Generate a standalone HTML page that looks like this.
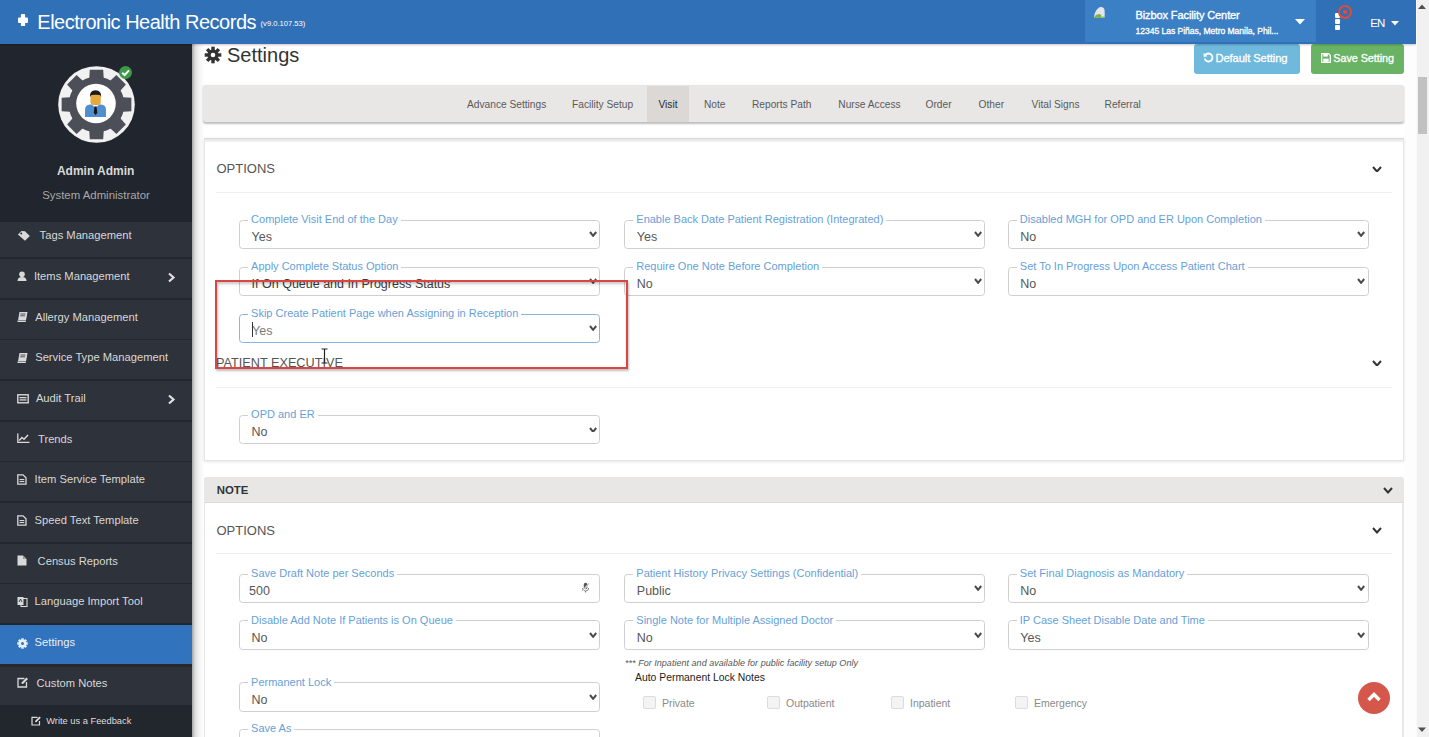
<!DOCTYPE html>
<html><head><meta charset="utf-8"><style>
html,body{margin:0;padding:0;width:1429px;height:737px;overflow:hidden;background:#fff}
.t{position:absolute;white-space:pre;font-family:"Liberation Sans", sans-serif}
div,svg{font-family:"Liberation Sans", sans-serif}
</style></head><body>
<div style="position:absolute;left:0px;top:0px;width:1416px;height:737px;background:#fff"></div>
<div style="position:absolute;left:192px;top:44px;width:12px;height:693px;background:linear-gradient(to right,#a5a5a5,#dcdcdc 3px,#f3f3f3 7px,#fcfcfc 11px)"></div>
<div style="position:absolute;left:1404px;top:44px;width:12px;height:693px;background:#fdfdfd"></div>
<svg style="position:absolute;left:204px;top:46px" width="18" height="18" viewBox="0 0 18 18"><g transform="translate(9 9)" fill="#333"><circle r="5.6"/><rect x="-1.7" y="-8.3" width="3.4" height="4" transform="rotate(0)"/><rect x="-1.7" y="-8.3" width="3.4" height="4" transform="rotate(45)"/><rect x="-1.7" y="-8.3" width="3.4" height="4" transform="rotate(90)"/><rect x="-1.7" y="-8.3" width="3.4" height="4" transform="rotate(135)"/><rect x="-1.7" y="-8.3" width="3.4" height="4" transform="rotate(180)"/><rect x="-1.7" y="-8.3" width="3.4" height="4" transform="rotate(225)"/><rect x="-1.7" y="-8.3" width="3.4" height="4" transform="rotate(270)"/><rect x="-1.7" y="-8.3" width="3.4" height="4" transform="rotate(315)"/><circle r="2.3" fill="#fff"/></g></svg>
<div class="t" style="left:227.0px;top:45.07px;font-size:20px;line-height:20px;color:#333;font-weight:400;font-style:normal;letter-spacing:0px;">Settings</div>
<div style="position:absolute;left:1194px;top:44px;width:106px;height:29.5px;background:#6fb9dc;border-radius:3px"></div>
<div class="t" style="left:1215.5px;top:53.02px;font-size:11.2px;line-height:11.2px;color:#fff;font-weight:400;font-style:normal;letter-spacing:-0.1px;-webkit-text-stroke:0.3px #fff;">Default Setting</div>
<svg style="position:absolute;left:1203px;top:52px" width="11" height="11" viewBox="0 0 11 11"><path d="M2.2 3.2 A4 4 0 1 1 1.6 6.5" fill="none" stroke="#fff" stroke-width="1.8"/><path d="M0.5 1 L0.8 5 L4.5 4.2 Z" fill="#fff"/></svg>
<div style="position:absolute;left:1311px;top:44px;width:93px;height:29.5px;background:#6ab364;border-radius:3px"></div>
<div class="t" style="left:1333.3px;top:53.36px;font-size:10.8px;line-height:10.8px;color:#fff;font-weight:400;font-style:normal;letter-spacing:-0.05px;-webkit-text-stroke:0.3px #fff;">Save Setting</div>
<svg style="position:absolute;left:1321px;top:53px" width="10" height="10" viewBox="0 0 10 10"><path d="M0.7 0.7 H7.5 L9.3 2.5 V9.3 H0.7 Z" fill="none" stroke="#fff" stroke-width="1.3"/><rect x="2.3" y="1" width="4.5" height="2.6" fill="#fff"/><rect x="2.3" y="5.6" width="5.4" height="3.2" fill="#fff"/></svg>
<div style="position:absolute;left:203px;top:84.5px;width:1201px;height:37.5px;background:#e9e7e6;border-radius:3px;box-shadow:0 1.5px 2px rgba(0,0,0,0.26)"></div>
<div style="position:absolute;left:647px;top:85.5px;width:42px;height:36.5px;background:#dcd8d6"></div>
<div class="t" style="left:467.0px;top:99.67px;font-size:10.2px;line-height:10.2px;color:#5a5a5a;font-weight:400;font-style:normal;letter-spacing:0px;">Advance Settings</div>
<div class="t" style="left:572.0px;top:99.67px;font-size:10.2px;line-height:10.2px;color:#5a5a5a;font-weight:400;font-style:normal;letter-spacing:0px;">Facility Setup</div>
<div class="t" style="left:658.5px;top:99.67px;font-size:10.2px;line-height:10.2px;color:#2a2a2a;font-weight:400;font-style:normal;letter-spacing:0px;">Visit</div>
<div class="t" style="left:704.0px;top:99.67px;font-size:10.2px;line-height:10.2px;color:#5a5a5a;font-weight:400;font-style:normal;letter-spacing:0px;">Note</div>
<div class="t" style="left:752.0px;top:99.67px;font-size:10.2px;line-height:10.2px;color:#5a5a5a;font-weight:400;font-style:normal;letter-spacing:0px;">Reports Path</div>
<div class="t" style="left:838.3px;top:99.67px;font-size:10.2px;line-height:10.2px;color:#5a5a5a;font-weight:400;font-style:normal;letter-spacing:0px;">Nurse Access</div>
<div class="t" style="left:925.5px;top:99.67px;font-size:10.2px;line-height:10.2px;color:#5a5a5a;font-weight:400;font-style:normal;letter-spacing:0px;">Order</div>
<div class="t" style="left:978.6px;top:99.67px;font-size:10.2px;line-height:10.2px;color:#5a5a5a;font-weight:400;font-style:normal;letter-spacing:0px;">Other</div>
<div class="t" style="left:1031.6px;top:99.67px;font-size:10.2px;line-height:10.2px;color:#5a5a5a;font-weight:400;font-style:normal;letter-spacing:0px;">Vital Signs</div>
<div class="t" style="left:1104.6px;top:99.67px;font-size:10.2px;line-height:10.2px;color:#5a5a5a;font-weight:400;font-style:normal;letter-spacing:0px;">Referral</div>
<div style="position:absolute;left:204px;top:138px;width:1200px;height:323px;background:#fff;border:1px solid #e6e6e6;border-top:1px solid #d9d9d9;box-sizing:border-box;box-shadow:0 1px 3px rgba(0,0,0,0.10)"></div>
<div style="position:absolute;left:205px;top:139px;width:1198px;height:3px;background:linear-gradient(#e6e6e6,#f3f3f3)"></div>
<div class="t" style="left:216.5px;top:161.80px;font-size:13px;line-height:13px;color:#555;font-weight:400;font-style:normal;letter-spacing:0px;">OPTIONS</div>
<div style="position:absolute;left:216px;top:191.5px;width:1176px;height:1px;background:#eeeeee"></div>
<svg style="position:absolute;left:1372.0px;top:165.75px" width="10" height="6.5"><path d="M1 1 L5.0 5.5 L9 1" fill="none" stroke="#333" stroke-width="2"/></svg>
<div style="position:absolute;left:239.1px;top:219.7px;width:361.4px;height:29.5px;border:1px solid #cfcfcf;border-radius:3.5px;box-sizing:border-box;background:transparent"></div>
<div class="t" style="left:248.1px;top:213.99px;font-size:11px;line-height:11px;color:#67a1d8;font-weight:400;font-style:normal;letter-spacing:0px;background:#fff;padding:0 3px;">Complete Visit End of the Day</div>
<div class="t" style="left:251.6px;top:230.92px;font-size:12.5px;line-height:12.5px;color:#575757;font-weight:400;font-style:normal;letter-spacing:0px;">Yes</div>
<svg style="position:absolute;left:588.6999999999999px;top:231.39999999999998px" width="8.2" height="5.8"><path d="M1 1 L4.1 4.8 L7.2 1" fill="none" stroke="#4a4a4a" stroke-width="2"/></svg>
<div style="position:absolute;left:624.3px;top:219.7px;width:361.09999999999997px;height:29.5px;border:1px solid #cfcfcf;border-radius:3.5px;box-sizing:border-box;background:transparent"></div>
<div class="t" style="left:633.3px;top:213.99px;font-size:11px;line-height:11px;color:#67a1d8;font-weight:400;font-style:normal;letter-spacing:0px;background:#fff;padding:0 3px;">Enable Back Date Patient Registration (Integrated)</div>
<div class="t" style="left:636.8px;top:230.92px;font-size:12.5px;line-height:12.5px;color:#575757;font-weight:400;font-style:normal;letter-spacing:0px;">Yes</div>
<svg style="position:absolute;left:973.5999999999998px;top:231.39999999999998px" width="8.2" height="5.8"><path d="M1 1 L4.1 4.8 L7.2 1" fill="none" stroke="#4a4a4a" stroke-width="2"/></svg>
<div style="position:absolute;left:1007.8px;top:219.7px;width:361.09999999999997px;height:29.5px;border:1px solid #cfcfcf;border-radius:3.5px;box-sizing:border-box;background:transparent"></div>
<div class="t" style="left:1016.8px;top:213.99px;font-size:11px;line-height:11px;color:#67a1d8;font-weight:400;font-style:normal;letter-spacing:0px;background:#fff;padding:0 3px;">Disabled MGH for OPD and ER Upon Completion</div>
<div class="t" style="left:1020.3px;top:230.92px;font-size:12.5px;line-height:12.5px;color:#575757;font-weight:400;font-style:normal;letter-spacing:0px;">No</div>
<svg style="position:absolute;left:1357.1px;top:231.39999999999998px" width="8.2" height="5.8"><path d="M1 1 L4.1 4.8 L7.2 1" fill="none" stroke="#4a4a4a" stroke-width="2"/></svg>
<div style="position:absolute;left:239.1px;top:266.7px;width:361.4px;height:29.5px;border:1px solid #cfcfcf;border-radius:3.5px;box-sizing:border-box;background:transparent"></div>
<div class="t" style="left:248.1px;top:260.99px;font-size:11px;line-height:11px;color:#67a1d8;font-weight:400;font-style:normal;letter-spacing:0px;background:#fff;padding:0 3px;">Apply Complete Status Option</div>
<div class="t" style="left:251.6px;top:277.92px;font-size:12.5px;line-height:12.5px;color:#3c3c3c;font-weight:400;font-style:normal;letter-spacing:0px;">If On Queue and In Progress Status</div>
<svg style="position:absolute;left:588.6999999999999px;top:278.40000000000003px" width="8.2" height="5.8"><path d="M1 1 L4.1 4.8 L7.2 1" fill="none" stroke="#4a4a4a" stroke-width="2"/></svg>
<div style="position:absolute;left:624.3px;top:266.7px;width:361.09999999999997px;height:29.5px;border:1px solid #cfcfcf;border-radius:3.5px;box-sizing:border-box;background:transparent"></div>
<div class="t" style="left:633.3px;top:260.99px;font-size:11px;line-height:11px;color:#67a1d8;font-weight:400;font-style:normal;letter-spacing:0px;background:#fff;padding:0 3px;">Require One Note Before Completion</div>
<div class="t" style="left:636.8px;top:277.92px;font-size:12.5px;line-height:12.5px;color:#575757;font-weight:400;font-style:normal;letter-spacing:0px;">No</div>
<svg style="position:absolute;left:973.5999999999998px;top:278.40000000000003px" width="8.2" height="5.8"><path d="M1 1 L4.1 4.8 L7.2 1" fill="none" stroke="#4a4a4a" stroke-width="2"/></svg>
<div style="position:absolute;left:1007.8px;top:266.7px;width:361.09999999999997px;height:29.5px;border:1px solid #cfcfcf;border-radius:3.5px;box-sizing:border-box;background:transparent"></div>
<div class="t" style="left:1016.8px;top:260.99px;font-size:11px;line-height:11px;color:#67a1d8;font-weight:400;font-style:normal;letter-spacing:0px;background:#fff;padding:0 3px;">Set To In Progress Upon Access Patient Chart</div>
<div class="t" style="left:1020.3px;top:277.92px;font-size:12.5px;line-height:12.5px;color:#575757;font-weight:400;font-style:normal;letter-spacing:0px;">No</div>
<svg style="position:absolute;left:1357.1px;top:278.40000000000003px" width="8.2" height="5.8"><path d="M1 1 L4.1 4.8 L7.2 1" fill="none" stroke="#4a4a4a" stroke-width="2"/></svg>
<div style="position:absolute;left:239.1px;top:313.7px;width:361.4px;height:29.5px;border:1px solid #86b7e3;border-radius:3.5px;box-sizing:border-box;background:transparent"></div>
<div class="t" style="left:248.1px;top:307.99px;font-size:11px;line-height:11px;color:#67a1d8;font-weight:400;font-style:normal;letter-spacing:0px;background:#fff;padding:0 3px;">Skip Create Patient Page when Assigning in Reception</div>
<div class="t" style="left:251.6px;top:324.92px;font-size:12.5px;line-height:12.5px;color:#575757;font-weight:400;font-style:normal;letter-spacing:0px;"></div>
<svg style="position:absolute;left:588.6999999999999px;top:325.40000000000003px" width="8.2" height="5.8"><path d="M1 1 L4.1 4.8 L7.2 1" fill="none" stroke="#4a4a4a" stroke-width="2"/></svg>
<div class="t" style="left:252.1px;top:324.92px;font-size:12.5px;line-height:12.5px;color:#7a7a7a;font-weight:400;font-style:normal;letter-spacing:0px;">Yes</div>
<div style="position:absolute;left:252px;top:322px;width:1px;height:15px;background:#333"></div>
<div class="t" style="left:216.0px;top:357.45px;font-size:12.7px;line-height:12.7px;color:#555;font-weight:400;font-style:normal;letter-spacing:0px;">PATIENT EXECUTIVE</div>
<svg style="position:absolute;left:1372.0px;top:359.75px" width="10" height="6.5"><path d="M1 1 L5.0 5.5 L9 1" fill="none" stroke="#333" stroke-width="2"/></svg>
<div style="position:absolute;left:216px;top:386.5px;width:1176px;height:1px;background:#eeeeee"></div>
<div style="position:absolute;left:239.1px;top:414.8px;width:361.4px;height:29.5px;border:1px solid #cfcfcf;border-radius:3.5px;box-sizing:border-box;background:transparent"></div>
<div class="t" style="left:248.1px;top:409.09px;font-size:11px;line-height:11px;color:#67a1d8;font-weight:400;font-style:normal;letter-spacing:0px;background:#fff;padding:0 3px;">OPD and ER</div>
<div class="t" style="left:251.6px;top:426.02px;font-size:12.5px;line-height:12.5px;color:#575757;font-weight:400;font-style:normal;letter-spacing:0px;">No</div>
<svg style="position:absolute;left:588.6999999999999px;top:426.50000000000006px" width="8.2" height="5.8"><path d="M1 1 L4.1 4.8 L7.2 1" fill="none" stroke="#4a4a4a" stroke-width="2"/></svg>
<div style="position:absolute;left:215px;top:280.3px;width:413px;height:88.8px;border:2.7px solid #dc4540;box-sizing:border-box;box-shadow:inset 1px 2px 3px rgba(0,0,0,0.22), 1px 2px 2px rgba(0,0,0,0.25)"></div>
<svg style="position:absolute;left:320px;top:348px" width="9" height="16"><path d="M1.5 1 H7.5 M4.5 1 V15 M1.5 15 H7.5" stroke="#222" stroke-width="1.2" fill="none"/></svg>
<div style="position:absolute;left:204px;top:477px;width:1200px;height:300px;background:#fff;border:1px solid #e6e6e6;border-right:2px solid #e8e8e8;border-radius:3px 3px 0 0;box-sizing:border-box"></div>
<div style="position:absolute;left:204px;top:477px;width:1200px;height:26px;background:#e8e7e6;border-radius:3px 3px 0 0"></div>
<div class="t" style="left:216.7px;top:484.95px;font-size:11.4px;line-height:11.4px;color:#333;font-weight:700;font-style:normal;letter-spacing:0px;">NOTE</div>
<div style="position:absolute;left:204px;top:502px;width:1200px;height:1px;background:#dddcdb"></div>
<svg style="position:absolute;left:1383.0px;top:487.25px" width="10" height="6.5"><path d="M1 1 L5.0 5.5 L9 1" fill="none" stroke="#333" stroke-width="2"/></svg>
<div class="t" style="left:216.5px;top:523.80px;font-size:13px;line-height:13px;color:#555;font-weight:400;font-style:normal;letter-spacing:0px;">OPTIONS</div>
<svg style="position:absolute;left:1372.0px;top:527.25px" width="10" height="6.5"><path d="M1 1 L5.0 5.5 L9 1" fill="none" stroke="#333" stroke-width="2"/></svg>
<div style="position:absolute;left:216px;top:552.5px;width:1176px;height:1px;background:#eeeeee"></div>
<div style="position:absolute;left:239.1px;top:573.5px;width:361.4px;height:29.5px;border:1px solid #cfcfcf;border-radius:3.5px;box-sizing:border-box;background:transparent"></div>
<div class="t" style="left:248.1px;top:567.79px;font-size:11px;line-height:11px;color:#67a1d8;font-weight:400;font-style:normal;letter-spacing:0px;background:#fff;padding:0 3px;">Save Draft Note per Seconds</div>
<div class="t" style="left:249.0px;top:584.72px;font-size:12.5px;line-height:12.5px;color:#575757;font-weight:400;font-style:normal;letter-spacing:0px;">500</div>
<svg style="position:absolute;left:581px;top:582px" width="9" height="11"><rect x="2.8" y="0.8" width="3.6" height="6.5" rx="1.8" fill="#555"/><path d="M1.5 6 Q1.5 9 4.6 9 Q7.7 9 7.7 6 M4.6 9 V10.5" stroke="#777" stroke-width="0.9" fill="none"/><path d="M0.8 9.5 L8 1.8" stroke="#fff" stroke-width="1.6"/><path d="M1 8.8 L7.8 1.5" stroke="#777" stroke-width="0.8"/></svg>
<div style="position:absolute;left:624.3px;top:573.5px;width:361.09999999999997px;height:29.5px;border:1px solid #cfcfcf;border-radius:3.5px;box-sizing:border-box;background:transparent"></div>
<div class="t" style="left:633.3px;top:567.79px;font-size:11px;line-height:11px;color:#67a1d8;font-weight:400;font-style:normal;letter-spacing:0px;background:#fff;padding:0 3px;">Patient History Privacy Settings (Confidential)</div>
<div class="t" style="left:636.8px;top:584.72px;font-size:12.5px;line-height:12.5px;color:#575757;font-weight:400;font-style:normal;letter-spacing:0px;">Public</div>
<svg style="position:absolute;left:973.5999999999998px;top:585.2px" width="8.2" height="5.8"><path d="M1 1 L4.1 4.8 L7.2 1" fill="none" stroke="#4a4a4a" stroke-width="2"/></svg>
<div style="position:absolute;left:1007.8px;top:573.5px;width:361.09999999999997px;height:29.5px;border:1px solid #cfcfcf;border-radius:3.5px;box-sizing:border-box;background:transparent"></div>
<div class="t" style="left:1016.8px;top:567.79px;font-size:11px;line-height:11px;color:#67a1d8;font-weight:400;font-style:normal;letter-spacing:0px;background:#fff;padding:0 3px;">Set Final Diagnosis as Mandatory</div>
<div class="t" style="left:1020.3px;top:584.72px;font-size:12.5px;line-height:12.5px;color:#575757;font-weight:400;font-style:normal;letter-spacing:0px;">No</div>
<svg style="position:absolute;left:1357.1px;top:585.2px" width="8.2" height="5.8"><path d="M1 1 L4.1 4.8 L7.2 1" fill="none" stroke="#4a4a4a" stroke-width="2"/></svg>
<div style="position:absolute;left:239.1px;top:620.4px;width:361.4px;height:29.5px;border:1px solid #cfcfcf;border-radius:3.5px;box-sizing:border-box;background:transparent"></div>
<div class="t" style="left:248.1px;top:614.69px;font-size:11px;line-height:11px;color:#67a1d8;font-weight:400;font-style:normal;letter-spacing:0px;background:#fff;padding:0 3px;">Disable Add Note If Patients is On Queue</div>
<div class="t" style="left:251.6px;top:631.62px;font-size:12.5px;line-height:12.5px;color:#575757;font-weight:400;font-style:normal;letter-spacing:0px;">No</div>
<svg style="position:absolute;left:588.6999999999999px;top:632.1px" width="8.2" height="5.8"><path d="M1 1 L4.1 4.8 L7.2 1" fill="none" stroke="#4a4a4a" stroke-width="2"/></svg>
<div style="position:absolute;left:624.3px;top:620.4px;width:361.09999999999997px;height:29.5px;border:1px solid #cfcfcf;border-radius:3.5px;box-sizing:border-box;background:transparent"></div>
<div class="t" style="left:633.3px;top:614.69px;font-size:11px;line-height:11px;color:#67a1d8;font-weight:400;font-style:normal;letter-spacing:0px;background:#fff;padding:0 3px;">Single Note for Multiple Assigned Doctor</div>
<div class="t" style="left:636.8px;top:631.62px;font-size:12.5px;line-height:12.5px;color:#575757;font-weight:400;font-style:normal;letter-spacing:0px;">No</div>
<svg style="position:absolute;left:973.5999999999998px;top:632.1px" width="8.2" height="5.8"><path d="M1 1 L4.1 4.8 L7.2 1" fill="none" stroke="#4a4a4a" stroke-width="2"/></svg>
<div style="position:absolute;left:1007.8px;top:620.4px;width:361.09999999999997px;height:29.5px;border:1px solid #cfcfcf;border-radius:3.5px;box-sizing:border-box;background:transparent"></div>
<div class="t" style="left:1016.8px;top:614.69px;font-size:11px;line-height:11px;color:#67a1d8;font-weight:400;font-style:normal;letter-spacing:0px;background:#fff;padding:0 3px;">IP Case Sheet Disable Date and Time</div>
<div class="t" style="left:1020.3px;top:631.62px;font-size:12.5px;line-height:12.5px;color:#575757;font-weight:400;font-style:normal;letter-spacing:0px;">Yes</div>
<svg style="position:absolute;left:1357.1px;top:632.1px" width="8.2" height="5.8"><path d="M1 1 L4.1 4.8 L7.2 1" fill="none" stroke="#4a4a4a" stroke-width="2"/></svg>
<div style="position:absolute;left:239.1px;top:682.3px;width:361.4px;height:29.5px;border:1px solid #cfcfcf;border-radius:3.5px;box-sizing:border-box;background:transparent"></div>
<div class="t" style="left:248.1px;top:676.59px;font-size:11px;line-height:11px;color:#67a1d8;font-weight:400;font-style:normal;letter-spacing:0px;background:#fff;padding:0 3px;">Permanent Lock</div>
<div class="t" style="left:251.6px;top:693.52px;font-size:12.5px;line-height:12.5px;color:#575757;font-weight:400;font-style:normal;letter-spacing:0px;">No</div>
<svg style="position:absolute;left:588.6999999999999px;top:694.0px" width="8.2" height="5.8"><path d="M1 1 L4.1 4.8 L7.2 1" fill="none" stroke="#4a4a4a" stroke-width="2"/></svg>
<div style="position:absolute;left:239.1px;top:728.6px;width:361.4px;height:29.5px;border:1px solid #cfcfcf;border-radius:3.5px;box-sizing:border-box;background:transparent"></div>
<div class="t" style="left:248.1px;top:722.89px;font-size:11px;line-height:11px;color:#67a1d8;font-weight:400;font-style:normal;letter-spacing:0px;background:#fff;padding:0 3px;">Save As</div>
<div class="t" style="left:251.6px;top:739.82px;font-size:12.5px;line-height:12.5px;color:#575757;font-weight:400;font-style:normal;letter-spacing:0px;"></div>
<div class="t" style="left:625.0px;top:658.88px;font-size:9px;line-height:9px;color:#555;font-weight:400;font-style:italic;letter-spacing:0.03px;">*** For Inpatient and available for public facility setup Only</div>
<div class="t" style="left:635.0px;top:672.50px;font-size:10.4px;line-height:10.4px;color:#222;font-weight:400;font-style:normal;letter-spacing:0px;">Auto Permanent Lock Notes</div>
<div style="position:absolute;left:643px;top:696.3px;width:13px;height:13px;background:#f4f4f4;border:1px solid #dcdcdc;border-radius:2px;box-sizing:border-box"></div>
<div class="t" style="left:662.0px;top:698.11px;font-size:10.5px;line-height:10.5px;color:#8a8a8a;font-weight:400;font-style:normal;letter-spacing:0px;">Private</div>
<div style="position:absolute;left:767px;top:696.3px;width:13px;height:13px;background:#f4f4f4;border:1px solid #dcdcdc;border-radius:2px;box-sizing:border-box"></div>
<div class="t" style="left:786.0px;top:698.11px;font-size:10.5px;line-height:10.5px;color:#8a8a8a;font-weight:400;font-style:normal;letter-spacing:0px;">Outpatient</div>
<div style="position:absolute;left:891px;top:696.3px;width:13px;height:13px;background:#f4f4f4;border:1px solid #dcdcdc;border-radius:2px;box-sizing:border-box"></div>
<div class="t" style="left:910.0px;top:698.11px;font-size:10.5px;line-height:10.5px;color:#8a8a8a;font-weight:400;font-style:normal;letter-spacing:0px;">Inpatient</div>
<div style="position:absolute;left:1015px;top:696.3px;width:13px;height:13px;background:#f4f4f4;border:1px solid #dcdcdc;border-radius:2px;box-sizing:border-box"></div>
<div class="t" style="left:1034.0px;top:698.11px;font-size:10.5px;line-height:10.5px;color:#8a8a8a;font-weight:400;font-style:normal;letter-spacing:0px;">Emergency</div>
<div style="position:absolute;left:1358px;top:681.5px;width:32px;height:32px;border-radius:50%;background:#d5574b"></div>
<svg style="position:absolute;left:1366px;top:690px" width="16" height="14"><path d="M2.5 10 L8 4.5 L13.5 10" stroke="#fff" stroke-width="3.4" fill="none"/></svg>
<div style="position:absolute;left:0px;top:44px;width:192px;height:693px;background:#2e323a"></div>
<div style="position:absolute;left:0px;top:216.75px;width:192px;height:1.6px;background:#24282e"></div>
<div class="t" style="left:39.6px;top:230.37px;font-size:11.2px;line-height:11.2px;color:#d8d8d8;font-weight:400;font-style:normal;letter-spacing:0px;">Tags Management</div>
<svg style="position:absolute;left:16.5px;top:230.2px" width="14" height="12" viewBox="0 0 14 12"><path d="M1 4.5 L4.5 1 L8 1.2 L12.8 6 L8 10.8 L1.2 4.8 Z" fill="#d9d9d9"/><circle cx="4.2" cy="3.6" r="1" fill="#2e323a"/></svg>
<div style="position:absolute;left:0px;top:257.40000000000003px;width:192px;height:1.6px;background:#24282e"></div>
<div class="t" style="left:33.9px;top:271.02px;font-size:11.2px;line-height:11.2px;color:#d8d8d8;font-weight:400;font-style:normal;letter-spacing:0px;">Items Management</div>
<svg style="position:absolute;left:166.5px;top:272.1px" width="9" height="11"><path d="M2 1.5 L6.5 5.5 L2 9.5" stroke="#e0e0e0" stroke-width="2.2" fill="none"/></svg>
<svg style="position:absolute;left:16.5px;top:270.8px" width="14" height="12" viewBox="0 0 14 12"><circle cx="5" cy="3.2" r="2.8" fill="#d9d9d9"/><path d="M0.5 10 Q0.5 6 5 6 Q9.5 6 9.5 10 Z" fill="#d9d9d9"/></svg>
<div style="position:absolute;left:0px;top:298.05px;width:192px;height:1.6px;background:#24282e"></div>
<div class="t" style="left:35.2px;top:311.67px;font-size:11.2px;line-height:11.2px;color:#d8d8d8;font-weight:400;font-style:normal;letter-spacing:0px;">Allergy Management</div>
<svg style="position:absolute;left:16.5px;top:311.4px" width="14" height="12" viewBox="0 0 14 12"><path d="M2.5 1 H10.5 L9 9.5 H1 Z" fill="#d9d9d9"/><path d="M1 9.5 L0.8 10.5 H8.8" stroke="#d9d9d9" stroke-width="1" fill="none"/><path d="M3.5 3 H8.5 M3.2 4.8 H8" stroke="#2e323a" stroke-width="0.8"/></svg>
<div style="position:absolute;left:0px;top:338.70000000000005px;width:192px;height:1.6px;background:#24282e"></div>
<div class="t" style="left:35.2px;top:352.32px;font-size:11.2px;line-height:11.2px;color:#d8d8d8;font-weight:400;font-style:normal;letter-spacing:0px;">Service Type Management</div>
<svg style="position:absolute;left:16.5px;top:352.1px" width="14" height="12" viewBox="0 0 14 12"><path d="M2.5 1 H10.5 L9 9.5 H1 Z" fill="#d9d9d9"/><path d="M1 9.5 L0.8 10.5 H8.8" stroke="#d9d9d9" stroke-width="1" fill="none"/><path d="M3.5 3 H8.5 M3.2 4.8 H8" stroke="#2e323a" stroke-width="0.8"/></svg>
<div style="position:absolute;left:0px;top:379.35px;width:192px;height:1.6px;background:#24282e"></div>
<div class="t" style="left:35.9px;top:392.97px;font-size:11.2px;line-height:11.2px;color:#d8d8d8;font-weight:400;font-style:normal;letter-spacing:0px;">Audit Trail</div>
<svg style="position:absolute;left:166.5px;top:394.1px" width="9" height="11"><path d="M2 1.5 L6.5 5.5 L2 9.5" stroke="#e0e0e0" stroke-width="2.2" fill="none"/></svg>
<svg style="position:absolute;left:16.5px;top:393.8px" width="14" height="12" viewBox="0 0 14 12"><rect x="0.8" y="0.8" width="10.4" height="8" fill="none" stroke="#d9d9d9" stroke-width="1.4"/><rect x="2.5" y="3" width="7" height="1.3" fill="#d9d9d9"/><rect x="2.5" y="5.3" width="7" height="1.3" fill="#d9d9d9"/></svg>
<div style="position:absolute;left:0px;top:420.0px;width:192px;height:1.6px;background:#24282e"></div>
<div class="t" style="left:38.0px;top:433.62px;font-size:11.2px;line-height:11.2px;color:#d8d8d8;font-weight:400;font-style:normal;letter-spacing:0px;">Trends</div>
<svg style="position:absolute;left:16.5px;top:433.4px" width="14" height="12" viewBox="0 0 14 12"><path d="M0.8 0.5 V9.3 H12.5" stroke="#d9d9d9" stroke-width="1.3" fill="none"/><path d="M2.2 7.5 L5 4.5 L7 6.3 L11 2" stroke="#d9d9d9" stroke-width="1.5" fill="none"/></svg>
<div style="position:absolute;left:0px;top:460.65000000000003px;width:192px;height:1.6px;background:#24282e"></div>
<div class="t" style="left:34.6px;top:474.27px;font-size:11.2px;line-height:11.2px;color:#d8d8d8;font-weight:400;font-style:normal;letter-spacing:0px;">Item Service Template</div>
<svg style="position:absolute;left:16.5px;top:473.6px" width="14" height="12" viewBox="0 0 14 12"><path d="M0.8 0.8 H6 L9 3.8 V10.2 H0.8 Z" fill="none" stroke="#d9d9d9" stroke-width="1.3"/><rect x="2.5" y="5" width="4.8" height="1.1" fill="#d9d9d9"/><rect x="2.5" y="7" width="4.8" height="1.1" fill="#d9d9d9"/></svg>
<div style="position:absolute;left:0px;top:501.3px;width:192px;height:1.6px;background:#24282e"></div>
<div class="t" style="left:34.6px;top:514.92px;font-size:11.2px;line-height:11.2px;color:#d8d8d8;font-weight:400;font-style:normal;letter-spacing:0px;">Speed Text Template</div>
<svg style="position:absolute;left:16.5px;top:514.7px" width="14" height="12" viewBox="0 0 14 12"><path d="M0.8 0.8 H6 L9 3.8 V10.2 H0.8 Z" fill="none" stroke="#d9d9d9" stroke-width="1.3"/><rect x="2.5" y="5" width="4.8" height="1.1" fill="#d9d9d9"/><rect x="2.5" y="7" width="4.8" height="1.1" fill="#d9d9d9"/></svg>
<div style="position:absolute;left:0px;top:541.95px;width:192px;height:1.6px;background:#24282e"></div>
<div class="t" style="left:37.6px;top:555.57px;font-size:11.2px;line-height:11.2px;color:#d8d8d8;font-weight:400;font-style:normal;letter-spacing:0px;">Census Reports</div>
<svg style="position:absolute;left:16.5px;top:554.9px" width="14" height="12" viewBox="0 0 14 12"><path d="M0.5 0.5 H6 L9.5 4 V10.5 H0.5 Z" fill="#d9d9d9"/><path d="M6 0.5 V4 H9.5" fill="#9a9a9a"/></svg>
<div style="position:absolute;left:0px;top:582.6px;width:192px;height:1.6px;background:#24282e"></div>
<div class="t" style="left:34.6px;top:596.22px;font-size:11.2px;line-height:11.2px;color:#d8d8d8;font-weight:400;font-style:normal;letter-spacing:0px;">Language Import Tool</div>
<svg style="position:absolute;left:16.5px;top:596.0px" width="14" height="12" viewBox="0 0 14 12"><rect x="0.5" y="1" width="6" height="8" fill="#d9d9d9"/><rect x="4" y="2.5" width="6" height="8" fill="none" stroke="#d9d9d9" stroke-width="1.1"/><path d="M2 6 L3.5 3 L5 6" stroke="#2e323a" stroke-width="0.9" fill="none"/></svg>
<div style="position:absolute;left:0px;top:625.35px;width:192px;height:39.5px;background:#3173bd"></div>
<div style="position:absolute;left:0px;top:623.25px;width:192px;height:1.6px;background:#24282e"></div>
<div class="t" style="left:34.6px;top:636.87px;font-size:11.2px;line-height:11.2px;color:#e8eef7;font-weight:400;font-style:normal;letter-spacing:0px;">Settings</div>
<svg style="position:absolute;left:16.5px;top:638.4px" width="11" height="11" viewBox="0 0 11 11"><g transform="translate(5.5 5.5)" fill="#e8eef7"><circle r="3.6"/><rect x="-1.3" y="-5.2" width="2.6" height="3" transform="rotate(0)"/><rect x="-1.3" y="-5.2" width="2.6" height="3" transform="rotate(45)"/><rect x="-1.3" y="-5.2" width="2.6" height="3" transform="rotate(90)"/><rect x="-1.3" y="-5.2" width="2.6" height="3" transform="rotate(135)"/><rect x="-1.3" y="-5.2" width="2.6" height="3" transform="rotate(180)"/><rect x="-1.3" y="-5.2" width="2.6" height="3" transform="rotate(225)"/><rect x="-1.3" y="-5.2" width="2.6" height="3" transform="rotate(270)"/><rect x="-1.3" y="-5.2" width="2.6" height="3" transform="rotate(315)"/><circle r="1.5" fill="#3173bd"/></g></svg>
<div style="position:absolute;left:0px;top:664.1999999999999px;width:192px;height:2.8px;background:#2a2829"></div>
<div class="t" style="left:36.5px;top:677.52px;font-size:11.2px;line-height:11.2px;color:#d8d8d8;font-weight:400;font-style:normal;letter-spacing:0px;">Custom Notes</div>
<svg style="position:absolute;left:16.5px;top:677.3px" width="14" height="12" viewBox="0 0 14 12"><path d="M7.5 1.5 H1 V10 H9.5 V5" fill="none" stroke="#d9d9d9" stroke-width="1.3"/><path d="M4.5 7 L4.8 5.2 L9.5 0.5 L11 2 L6.3 6.7 Z" fill="#d9d9d9"/></svg>
<div style="position:absolute;left:0px;top:704.8px;width:192px;height:33px;background:#22262d"></div>
<svg style="position:absolute;left:31px;top:715.5px" width="11" height="10" viewBox="0 0 11 10"><path d="M6.5 1.3 H1 V9 H8.5 V5" fill="none" stroke="#ddd" stroke-width="1.2"/><path d="M4 6.3 L4.3 4.7 L8.5 0.5 L9.8 1.8 L5.6 6 Z" fill="#ddd"/></svg>
<div class="t" style="left:46.2px;top:717.13px;font-size:9.3px;line-height:9.3px;color:#dedede;font-weight:400;font-style:normal;letter-spacing:0px;">Write us a Feedback</div>
<div style="position:absolute;left:0px;top:44px;width:192px;height:178px;background:#21252d"></div>
<svg style="position:absolute;left:57.8px;top:65.8px" width="77" height="77" viewBox="0 0 77 77">
<circle cx="38.5" cy="38.5" r="38.3" fill="#f1f1f1"/>
<polygon points="31.30,11.96 31.80,3.64 45.20,3.64 45.70,11.96 52.17,14.64 58.41,9.11 67.89,18.59 62.36,24.83 65.04,31.30 73.36,31.80 73.36,45.20 65.04,45.70 62.36,52.17 67.89,58.41 58.41,67.89 52.17,62.36 45.70,65.04 45.20,73.36 31.80,73.36 31.30,65.04 24.83,62.36 18.59,67.89 9.11,58.41 14.64,52.17 11.96,45.70 3.64,45.20 3.64,31.80 11.96,31.30 14.64,24.83 9.11,18.59 18.59,9.11 24.83,14.64" fill="#4c4f57"/>
<circle cx="38.5" cy="38.5" r="27.8" fill="#4c4f57"/>
<circle cx="38" cy="37.5" r="19.8" fill="#fff"/>
<path d="M27 51 V44 Q27 39 32 38.6 L43 38.6 Q48 39 48 44 V51 Z" fill="#4f8fd0"/>
<path d="M33.5 38.6 L37.5 41.5 L41.5 38.6 Z" fill="#fff"/>
<path d="M36.5 40.5 L38.5 40.5 L39.3 47 L37.5 49 L35.8 47 Z" fill="#151515"/>
<rect x="32.5" y="27" width="10.3" height="12" rx="3" fill="#e7a93d"/>
<path d="M32 31 Q31.5 24.5 37.5 24.3 Q43.5 24.5 43.2 31 L42 29 Q38 28.5 33.5 29 Z" fill="#1c1c1c"/>
</svg>
<div style="position:absolute;left:119.4px;top:65.6px;width:13px;height:13px;border-radius:50%;background:#3d9a48"></div>
<svg style="position:absolute;left:119.4px;top:65.6px" width="13" height="13"><path d="M3.2 6.8 L5.6 9 L10 4.4" stroke="#fff" stroke-width="2" fill="none"/></svg>
<div class="t" style="left:56.9px;top:165.24px;font-size:12px;line-height:12px;color:#d9d9d9;font-weight:700;font-style:normal;letter-spacing:0px;">Admin Admin</div>
<div class="t" style="left:42.2px;top:189.55px;font-size:11.4px;line-height:11.4px;color:#a8a8a8;font-weight:400;font-style:normal;letter-spacing:0px;">System Administrator</div>
<div style="position:absolute;left:0px;top:0px;width:1416px;height:44px;background:#3070b7;box-shadow:0 1px 2px rgba(0,0,0,0.22)"></div>
<div style="position:absolute;left:1085px;top:0px;width:231px;height:42px;background:#3b80c5"></div>
<svg style="position:absolute;left:18.2px;top:13.7px" width="10" height="12.6"><rect x="2.9" y="0" width="4.2" height="12.6" rx="0.8" fill="#fff"/><rect x="0" y="3.6" width="10" height="5.3" rx="0.8" fill="#fff"/></svg>
<div class="t" style="left:37.3px;top:11.67px;font-size:20px;line-height:20px;color:#fff;font-weight:400;font-style:normal;letter-spacing:-0.5px;">Electronic Health Records</div>
<div class="t" style="left:260.6px;top:19.87px;font-size:7.6px;line-height:7.6px;color:#fff;font-weight:400;font-style:normal;letter-spacing:0px;">(v9.0.107.53)</div>
<svg style="position:absolute;left:1093px;top:6px" width="13" height="13"><path d="M1 11.5 Q1.5 4 7 1 Q11 0.5 11.5 4 Q12 8 11.5 11.5 Z" fill="#e6e4f0"/><path d="M1 11.8 Q2 8 7 8 Q9 9 8.5 11.8 Z" fill="#7ab83a"/><path d="M10 10 L12 11.8 H9 Z" fill="#8cc45a"/></svg>
<div class="t" style="left:1135.5px;top:10.09px;font-size:11px;line-height:11px;color:#fff;font-weight:400;font-style:normal;letter-spacing:-0.1px;-webkit-text-stroke:0.35px #fff;">Bizbox Facility Center</div>
<div class="t" style="left:1135.5px;top:26.72px;font-size:8.6px;line-height:8.6px;color:#fff;font-weight:400;font-style:normal;letter-spacing:-0.05px;-webkit-text-stroke:0.3px #fff;">12345 Las Piñas, Metro Manila, Phil...</div>
<svg style="position:absolute;left:1295px;top:19px" width="10" height="6"><path d="M0 0 H10 L5 5.5 Z" fill="#fff"/></svg>
<div style="position:absolute;left:1334.5px;top:13px;width:5px;height:4.6px;background:#fff;border-radius:1px"></div>
<div style="position:absolute;left:1334.5px;top:19px;width:5px;height:4.6px;background:#fff;border-radius:1px"></div>
<div style="position:absolute;left:1334.5px;top:25px;width:5px;height:4.6px;background:#fff;border-radius:1px"></div>
<div style="position:absolute;left:1337.9px;top:5px;width:13.8px;height:13.8px;border-radius:50%;border:2px solid #e24a36;box-sizing:border-box"></div>
<div style="position:absolute;left:1342.5px;top:9.6px;width:4.6px;height:4.6px;border-radius:50%;background:#ee4a2a"></div>
<div class="t" style="left:1370.3px;top:18.07px;font-size:11.5px;line-height:11.5px;color:#fff;font-weight:400;font-style:normal;letter-spacing:-0.9px;">EN</div>
<svg style="position:absolute;left:1391px;top:21px" width="9" height="5"><path d="M0 0 H8 L4 4.5 Z" fill="#fff"/></svg>
<div style="position:absolute;left:1416px;top:0px;width:13px;height:737px;background:#f1f1f1;border-left:1px solid #fafafa;box-sizing:border-box"></div>
<div style="position:absolute;left:1417.5px;top:77px;width:9.5px;height:57px;background:#c1c1c1"></div>
<svg style="position:absolute;left:1418px;top:4px" width="9" height="6"><path d="M0 5 H8 L4 0.5 Z" fill="#505050"/></svg>
<svg style="position:absolute;left:1418px;top:727px" width="9" height="6"><path d="M0 0.5 H8 L4 5 Z" fill="#505050"/></svg>
</body></html>
